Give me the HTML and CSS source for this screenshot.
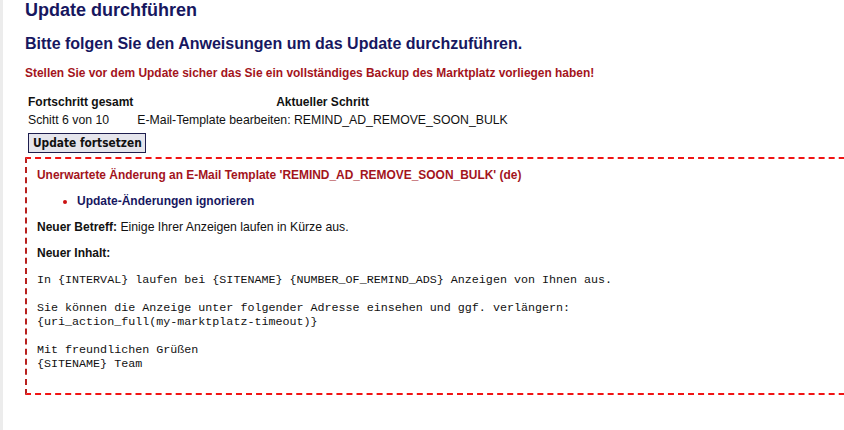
FILE: index.html
```html
<!DOCTYPE html>
<html lang="de">
<head>
<meta charset="utf-8">
<title>Update durchführen</title>
<link rel="stylesheet" href="styles.css">
</head>
<body>
<div class="page">
  <h1 class="title">Update durchführen</h1>
  <h2 class="subtitle">Bitte folgen Sie den Anweisungen um das Update durchzuführen.</h2>
  <p class="warning">Stellen Sie vor dem Update sicher das Sie ein vollständiges Backup des Marktplatz vorliegen haben!</p>
  <table class="progress">
    <tr>
      <th>Fortschritt gesamt</th>
      <th>Aktueller Schritt</th>
    </tr>
    <tr>
      <td>Schitt 6 von 10</td>
      <td>E-Mail-Template bearbeiten: REMIND_AD_REMOVE_SOON_BULK</td>
    </tr>
  </table>
  <button class="continue" type="button">Update fortsetzen</button>
  <div class="notice">
    <p class="notice-title">Unerwartete Änderung an E-Mail Template 'REMIND_AD_REMOVE_SOON_BULK' (de)</p>
    <ul class="actions">
      <li><a href="#" class="action-link">Update-Änderungen ignorieren</a></li>
    </ul>
    <p class="field"><b class="label">Neuer Betreff:</b> Einige Ihrer Anzeigen laufen in Kürze aus.</p>
    <p class="field"><b class="label">Neuer Inhalt:</b></p>
    <pre class="content">In {INTERVAL} laufen bei {SITENAME} {NUMBER_OF_REMIND_ADS} Anzeigen von Ihnen aus.

Sie können die Anzeige unter folgender Adresse einsehen und ggf. verlängern:
{uri_action_full(my-marktplatz-timeout)}

Mit freundlichen Grüßen
{SITENAME} Team</pre>
  </div>
</div>
</body>
</html>
```

FILE: styles.css
```css
html {
  overflow: hidden;
  background: #ffffff;
}

body {
  margin: 0;
  height: 430px;
  border-left: 3px solid #ececec;
  font-family: "Liberation Sans", Arial, sans-serif;
  font-size: 12.25px;
  color: #111111;
  background: #ffffff;
}

.page {
  width: 880px;
  padding-left: 22px;
}

.title {
  margin: 0;
  font-size: 18px;
  line-height: 20px;
  font-weight: bold;
  color: #17175f;
}

.subtitle {
  margin: 15px 0 0 0;
  font-size: 16px;
  line-height: 18px;
  font-weight: bold;
  color: #17175f;
}

.warning {
  margin: 13px 0 0 0;
  font-size: 11.95px;
  line-height: 14px;
  font-weight: bold;
  color: #a3141c;
}

.progress {
  margin-top: 12px;
  border-spacing: 2px;
  font-size: 12.25px;
}

.progress th,
.progress td {
  padding: 1px;
  line-height: 14px;
}

.progress th {
  font-weight: bold;
  font-size: 12px;
  text-align: center;
}

.progress td {
  text-align: left;
}

.continue {
  display: block;
  margin: 3px 0 0 3px;
  height: 20px;
  padding: 0 3px 0 4px;
  border: 1px solid #1e1e4e;
  background: #e5e5ec;
  font-family: "DejaVu Sans Condensed", "DejaVu Sans", sans-serif;
  font-weight: bold;
  font-size: 11.8px;
  color: #111111;
  border-radius: 0;
}

.notice {
  margin-top: 4px;
  border: 2px dashed #f01414;
  border-left-color: #b8201e;
  padding: 9px 10px 10px 10px;
}

.notice-title {
  margin: 0;
  font-size: 11.95px;
  line-height: 14px;
  font-weight: bold;
  color: #a3141c;
}

.actions {
  margin: 12px 0 0 0;
  padding-left: 40px;
  color: #cc1111;
  font-size: 12px;
  line-height: 14px;
}

.action-link {
  color: #17175f;
  font-weight: bold;
  text-decoration: none;
}

.field {
  margin: 12px 0 0 0;
  line-height: 14px;
}

.label {
  font-size: 12px;
}

.content {
  margin: 13px 0 12px 0;
  font-family: "Liberation Mono", "Courier New", monospace;
  font-size: 11.7px;
  line-height: 14px;
  color: #111111;
}
```
